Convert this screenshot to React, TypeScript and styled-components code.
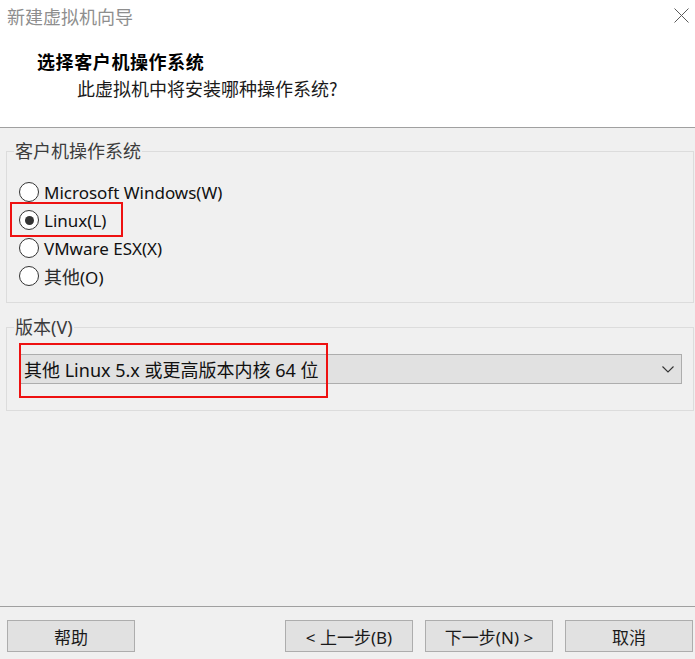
import React from "react";
import styled, { createGlobalStyle } from "styled-components";

const Global = createGlobalStyle`
  html, body { margin: 0; padding: 0; background: #f0f0f0; }
  body { font-family: "Noto Sans", "Noto Sans CJK SC", sans-serif; }
  * { box-sizing: border-box; }
`;

const Window = styled.div`
  width: 695px;
  height: 659px;
  display: flex;
  flex-direction: column;
  background: #f0f0f0;
  overflow: hidden;
`;

const Header = styled.div`
  height: 128px;
  background: #ffffff;
  border-bottom: 1px solid #a0a0a0;
  display: flex;
  flex-direction: column;
`;

const TitleBar = styled.div`
  height: 31px;
  display: flex;
  align-items: center;
  justify-content: space-between;
  padding: 0 6px 0 7px;
`;

const TitleText = styled.span`
  font-family: "Noto Sans CJK SC", sans-serif;
  font-size: 18px;
  color: #8e8e8e;
  line-height: 1;
`;

const CloseBtn = styled.span`
  width: 15px;
  height: 15px;
  display: flex;
`;

const Heading = styled.div`
  margin-top: 18px;
  padding-left: 37px;
  font-family: "Noto Sans CJK SC", sans-serif;
  font-weight: 700;
  font-size: 18px;
  line-height: 24px;
  color: #000;
  letter-spacing: 0.6px;
`;

const SubHeading = styled.div`
  margin-top: 3px;
  padding-left: 77px;
  font-family: "Noto Sans CJK SC", sans-serif;
  font-size: 18px;
  line-height: 24px;
  color: #1a1a1a;
`;

const Content = styled.div`
  flex: 1;
  display: flex;
  flex-direction: column;
  gap: 14px;
  padding: 13px 1px 0 6px;
`;

const Group = styled.fieldset<{ $pb: number; $pt: number }>`
  margin: 0;
  border: 1px solid #dcdcdc;
  padding: ${(p) => p.$pt}px 11px ${(p) => p.$pb}px 7px;
  min-width: 0;
`;

const Legend = styled.legend`
  padding: 0 1px;
  font-size: 18px;
  line-height: 20px;
  color: #3c3c3c;
`;

const RadioList = styled.div`
  display: flex;
  flex-direction: column;
  padding-left: 5px;
`;

const RadioRow = styled.label`
  position: relative;
  height: 28px;
  display: flex;
  align-items: center;
  gap: 5px;
  font-size: 17px;
  color: #111;
`;

const Cjk = styled.span`
  font-size: 18px;
  color: #2a2a2a;
`;

const Circle = styled.span<{ $checked?: boolean }>`
  width: 20px;
  height: 20px;
  border-radius: 50%;
  border: 1.5px solid #333;
  background: #fff;
  display: flex;
  align-items: center;
  justify-content: center;
  flex: none;
  &::after {
    content: "";
    width: 9px;
    height: 9px;
    border-radius: 50%;
    background: ${(p) => (p.$checked ? "#333" : "transparent")};
  }
`;

const Highlight = styled.span<{ $l: number; $t: number; $w: number; $h: number }>`
  position: absolute;
  left: ${(p) => p.$l}px;
  top: ${(p) => p.$t}px;
  width: ${(p) => p.$w}px;
  height: ${(p) => p.$h}px;
  border: 2px solid #ee1111;
  pointer-events: none;
`;

const SelectBox = styled.div`
  position: relative;
  margin-left: 6px;
  height: 30px;
  background: #e1e1e1;
  border: 1px solid #adadad;
  display: flex;
  align-items: center;
  justify-content: space-between;
  padding: 0 7px 0 3px;
  font-size: 18px;
  color: #111;
`;

const Spacer = styled.div`
  flex: 1;
`;

const Footer = styled.div`
  border-top: 1px solid #a0a0a0;
  padding: 13px 2px 7px 7px;
  display: flex;
  align-items: center;
`;

const ButtonGroup = styled.div`
  display: flex;
  gap: 12px;
  margin-left: auto;
`;

const Button = styled.button`
  width: 128px;
  height: 32px;
  background: #e1e1e1;
  border: 1px solid #adadad;
  font-family: "Noto Sans", "Noto Sans CJK SC", sans-serif;
  font-size: 17px;
  color: #1a1a1a;
  padding: 0;
  display: flex;
  align-items: center;
  justify-content: center;
`;

const radios = [
  { label: "Microsoft Windows(W)", checked: false },
  { label: "Linux(L)", checked: true },
  { label: "VMware ESX(X)", checked: false },
];

export default function App() {
  return (
    <Window>
      <Global />
      <Header>
        <TitleBar>
          <TitleText>新建虚拟机向导</TitleText>
          <CloseBtn>
            <svg width="15" height="15" viewBox="0 0 15 15">
              <path d="M0.5 0.5 L14.5 14.5 M14.5 0.5 L0.5 14.5" stroke="#5a5a5a" strokeWidth="1" fill="none" />
            </svg>
          </CloseBtn>
        </TitleBar>
        <Heading>选择客户机操作系统</Heading>
        <SubHeading>此虚拟机中将安装哪种操作系统?</SubHeading>
      </Header>
      <Content>
        <Group $pt={17} $pb={12}>
          <Legend>客户机操作系统</Legend>
          <RadioList>
            {radios.map((r) => (
              <RadioRow key={r.label}>
                <Circle $checked={r.checked} />
                {r.label}
                {r.checked && <Highlight $l={-9} $t={-4} $w={113} $h={35} />}
              </RadioRow>
            ))}
            <RadioRow>
              <Circle />
              <span>
                <Cjk>其他</Cjk>(O)
              </span>
            </RadioRow>
          </RadioList>
        </Group>
        <Group $pt={17} $pb={26}>
          <Legend>版本(V)</Legend>
          <SelectBox>
            <span>其他 Linux 5.x 或更高版本内核 64 位</span>
            <svg width="12" height="7" viewBox="0 0 12 7">
              <polyline points="0.5,0.5 6,6 11.5,0.5" stroke="#333" strokeWidth="1.1" fill="none" />
            </svg>
            <Highlight $l={-2} $t={-12} $w={309} $h={55} />
          </SelectBox>
        </Group>
        <Spacer />
      </Content>
      <Footer>
        <Button>帮助</Button>
        <ButtonGroup>
          <Button>&lt; 上一步(B)</Button>
          <Button>下一步(N) &gt;</Button>
          <Button>取消</Button>
        </ButtonGroup>
      </Footer>
    </Window>
  );
}
